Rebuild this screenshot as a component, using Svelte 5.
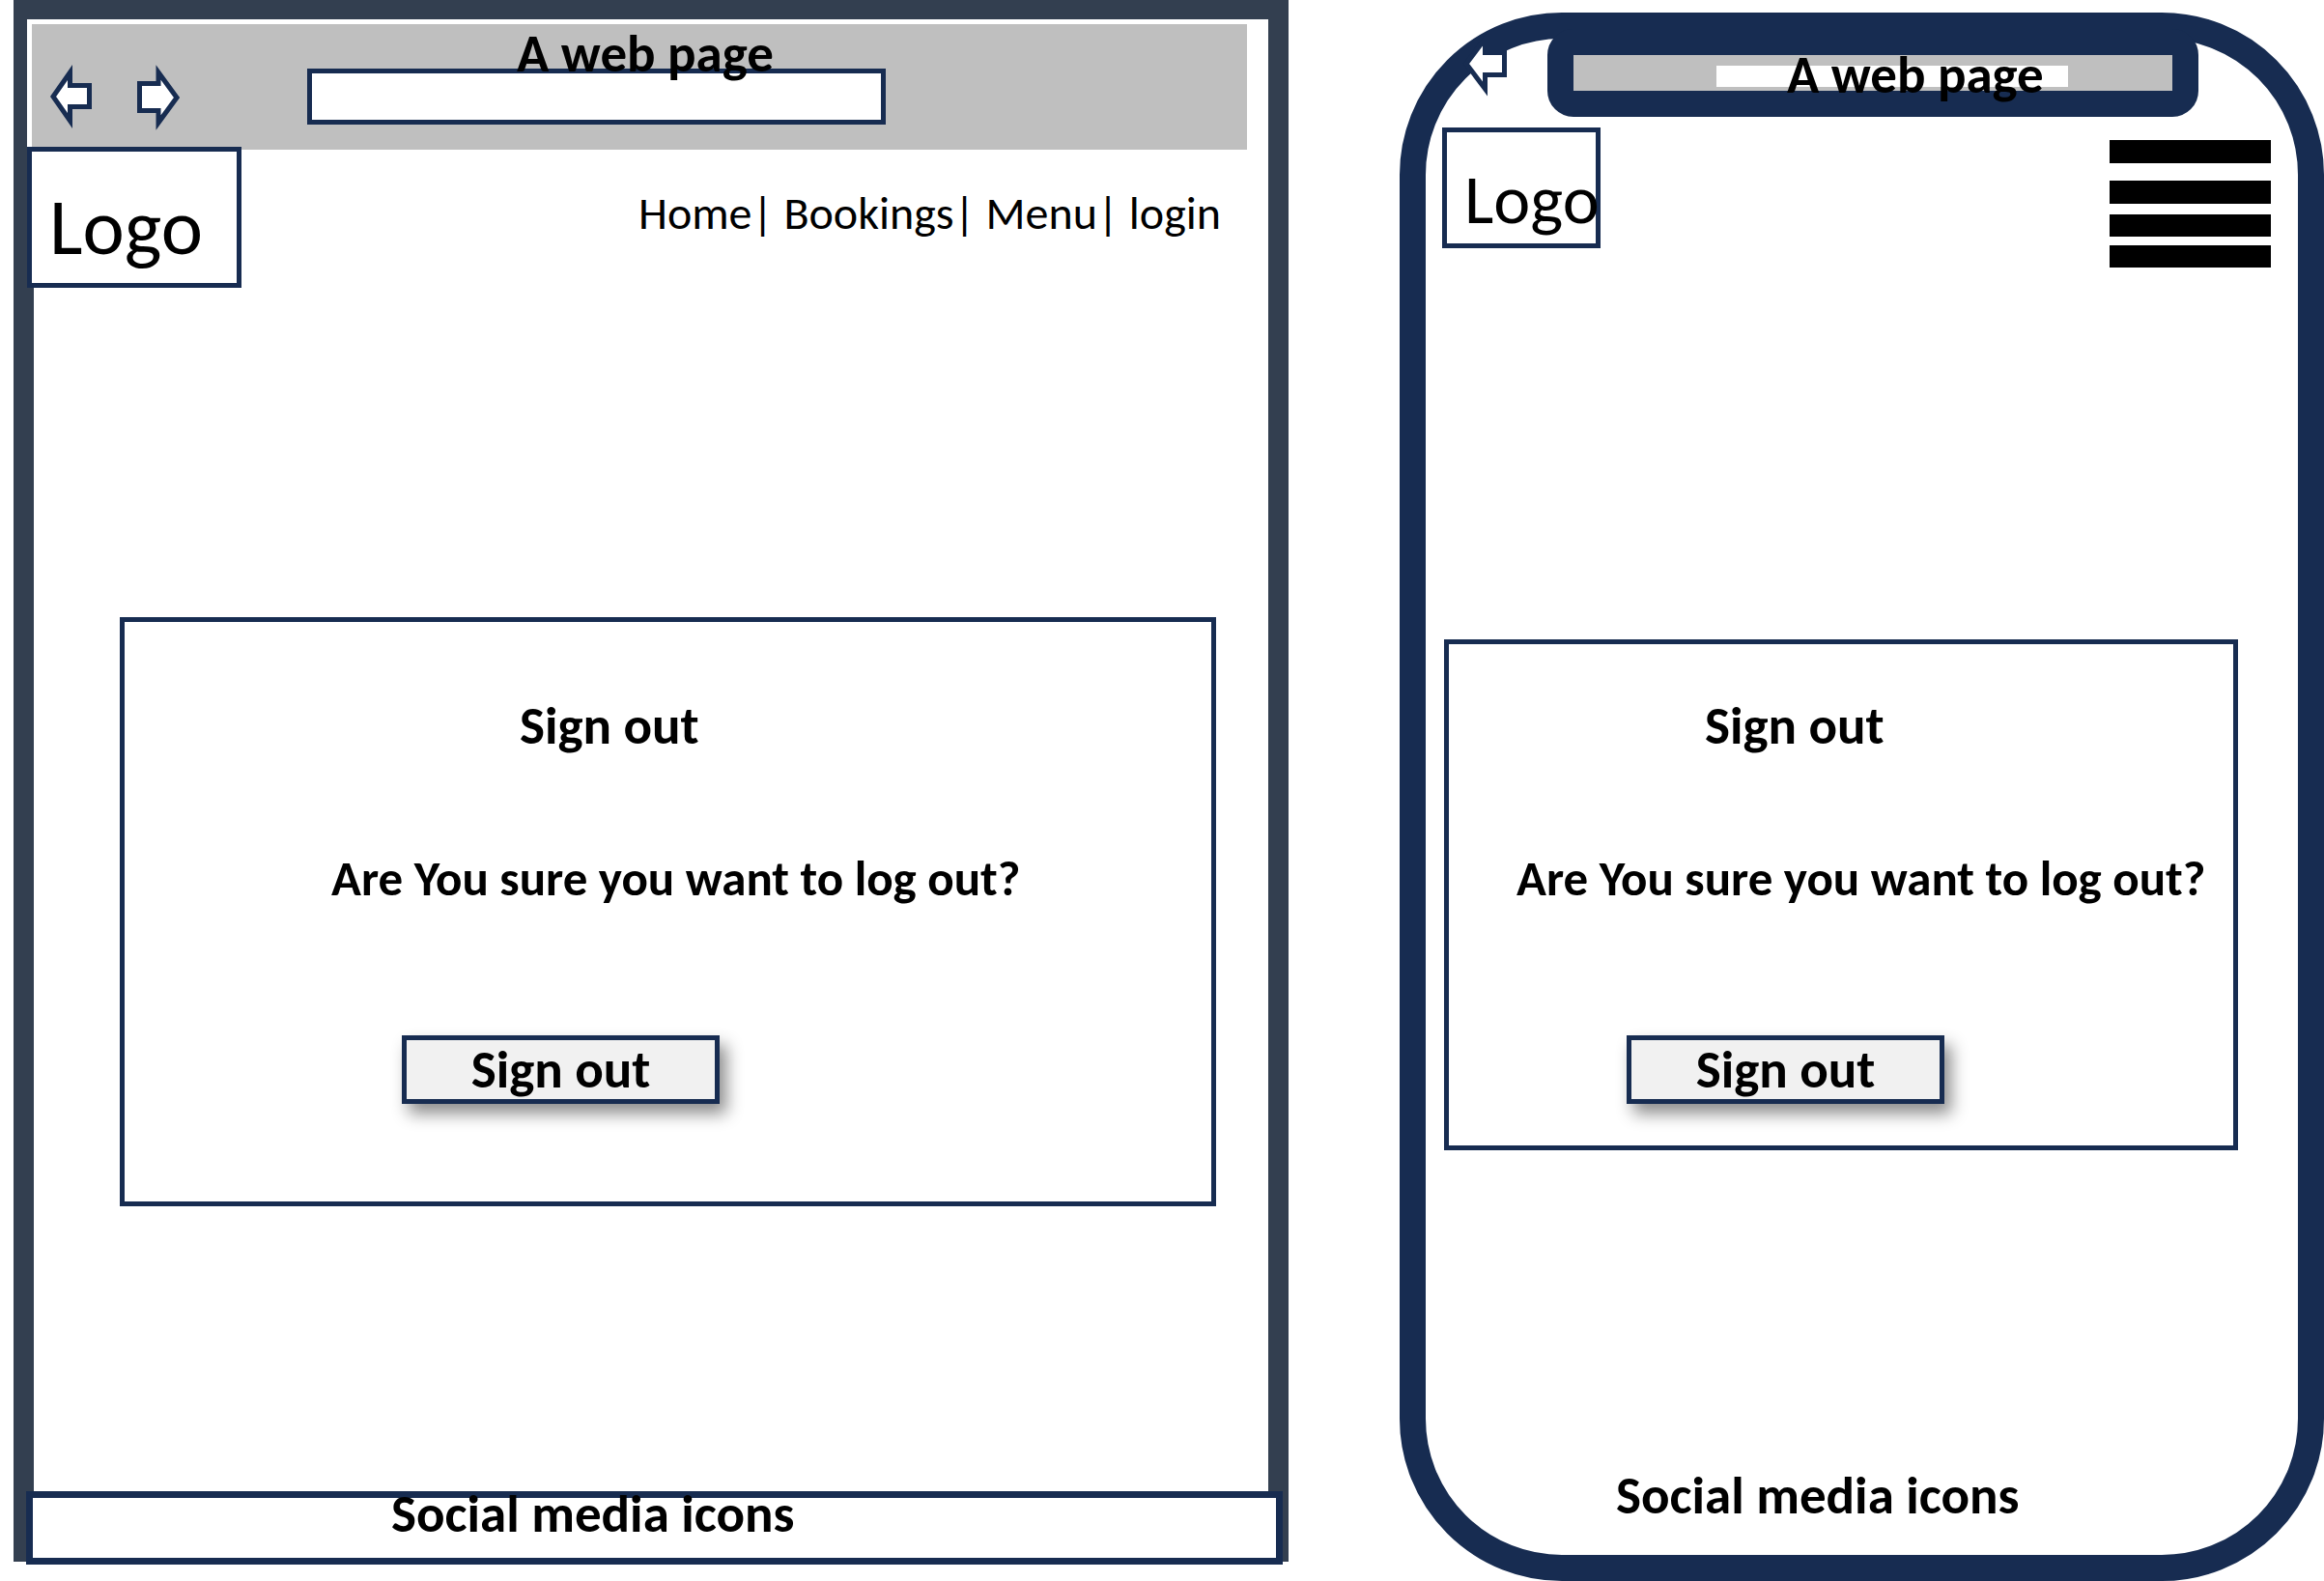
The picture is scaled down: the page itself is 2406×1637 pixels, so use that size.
<script>
  const links = ['Home', 'Bookings', 'Menu', 'login'];
</script>

{#snippet dialog(id)}
  <section class="dialog" aria-labelledby={id}>
    <h2 {id}>Sign out</h2>
    <p class="question">Are You sure you want to log out?</p>
    <button class="confirm" type="button">Sign out</button>
  </section>
{/snippet}

<div class="board">
  <article class="browser">
    <div class="toolbar">
      <div class="controls">
        <button class="icon" type="button" aria-label="Back">
          <svg width="44" height="70" viewBox="0 0 44 70">
            <path d="M3 35 20.500 10V23.500H40.500V45.500H20.500V60Z" />
          </svg>
        </button>
        <button class="icon" type="button" aria-label="Forward">
          <svg width="44" height="70" viewBox="0 0 44 70">
            <path d="M41 36 22 10V21.500H2.500V49.500H22V62Z" />
          </svg>
        </button>
        <input class="address" type="text" aria-label="Address" />
      </div>
      <h1>A web page</h1>
    </div>

    <header class="masthead">
      <div class="logo">Logo</div>
      <nav>
        {#each links as link, i}<a href="#{link.toLowerCase()}">{link}</a>{i < links.length - 1 ? '| ' : ''}{/each}
      </nav>
    </header>

    {@render dialog('desktop-title')}

    <footer>Social media icons</footer>
  </article>

  <article class="phone">
    <div class="top">
      <button class="icon" type="button" aria-label="Back">
        <svg width="50" height="72" viewBox="0 0 50 72">
          <path d="M6 34 25.500 8V22.500H45.500V45.500H25.500V60Z" />
        </svg>
      </button>
      <div class="notch">
        <input class="address" type="text" aria-label="Address" />
        <h1>A web page</h1>
      </div>
    </div>

    <header class="masthead">
      <div class="logo">Logo</div>
      <button class="menu" type="button" aria-label="Menu">
        <svg width="167" height="132" viewBox="0 0 167 132">
          <path d="M0 0H167V24H0ZM0 42H167V66H0ZM0 77H167V100H0ZM0 109H167V132H0Z" />
        </svg>
      </button>
    </header>

    {@render dialog('phone-title')}

    <footer>Social media icons</footer>
  </article>
</div>

<style>
  :global(body) {
    margin: 0;
    background: #fff;
  }

  .board {
    --navy: #172c51;
    --slate: #333f50;
    --grey: #bfbfbf;
    display: grid;
    grid-template-columns: minmax(0, 1320fr) minmax(0, 957fr);
    column-gap: 115px;
    align-items: start;
    padding-left: 14px;
    color: #000;
    font-family: Carlito, Calibri, Lato, sans-serif;
    font-size: 55px;
    line-height: 62px;
  }

  .board * {
    box-sizing: border-box;
  }

  h1,
  h2,
  p {
    margin: 0;
    font-size: inherit;
    font-weight: 700;
    white-space: nowrap;
  }

  button,
  input {
    margin: 0;
    padding: 0;
    border: 0;
    border-radius: 0;
    background: none;
    color: inherit;
    font: inherit;
  }

  svg {
    display: block;
  }

  .icon {
    flex: none;
  }

  .icon path {
    fill: #fff;
    stroke: var(--navy);
    stroke-width: 5;
    stroke-miterlimit: 10;
  }

  .address {
    min-width: 0;
    background: #fff;
  }

  .masthead {
    display: flex;
    justify-content: space-between;
    align-items: flex-start;
  }

  .logo {
    flex: none;
    border: 5px solid var(--navy);
    background: #fff;
    line-height: 80px;
  }

  .dialog {
    display: flex;
    flex-direction: column;
    align-items: flex-start;
    border: 5px solid var(--navy);
  }

  .question {
    margin-top: 96px;
    font-size: 51px;
  }

  .confirm {
    width: 329px;
    height: 71px;
    margin-top: 131px;
    border: 5px solid var(--navy);
    background: #f1f1f1;
    box-shadow: 7px 10px 16px rgba(0, 0, 0, 0.45);
    font-weight: 700;
  }

  footer {
    font-weight: 700;
  }

  /* Desktop browser */
  .browser {
    border: 21px solid var(--slate);
    border-top-width: 20px;
    border-bottom: 0;
  }

  .browser .toolbar {
    display: grid;
    margin: 0 17px 0 -7px;
    border: 5px solid #fff;
    background: var(--grey);
  }

  .browser .toolbar > * {
    grid-area: 1 / 1;
  }

  .browser h1 {
    justify-self: center;
    padding-left: 12px;
  }

  .browser .controls {
    display: flex;
    align-items: center;
    padding: 40px 20px 20px 19px;
  }

  .browser .icon + .icon {
    margin-left: 46px;
  }

  .browser .address {
    flex: 0 1 599px;
    height: 58px;
    margin-left: 132px;
    border: 5px solid var(--navy);
  }

  .browser .masthead {
    margin: -8px 0 0 -7px;
    padding-right: 49px;
  }

  .browser .logo {
    width: 222px;
    padding: 38px 0 18px 18px;
    font-size: 82px;
  }

  .browser nav {
    padding-top: 38px;
    font-size: 48px;
    white-space: nowrap;
  }

  nav a {
    color: inherit;
    text-decoration: none;
  }

  .browser .dialog {
    margin: 341px 54px 295px 89px;
    padding: 77px 0 101px 214px;
  }

  .browser h2 {
    margin-left: 195px;
  }

  .browser .confirm {
    margin-left: 73px;
  }

  .browser footer {
    margin: 0 -15px -3px -8px;
    padding: 0 0 28px 371px;
    border: 7px solid var(--navy);
    background: #fff;
    line-height: 34px;
  }

  /* Phone */
  .phone {
    margin-top: 13px;
    border: 27px solid var(--navy);
    border-radius: 168px;
  }

  .phone .top {
    display: flex;
    align-items: flex-start;
    margin-top: -10px;
    padding: 0 103px 0 36px;
  }

  .phone .icon {
    margin: 2px 40px 0 0;
  }

  .phone .notch {
    flex: 1;
    display: grid;
    grid-template-rows: 37px;
    border: 27px solid var(--navy);
    border-radius: 27px;
    background: var(--grey);
  }

  .notch > * {
    grid-area: 1 / 1;
  }

  .notch .address {
    width: 364px;
    height: 22px;
    margin: 11px 0 0 148px;
  }

  .notch h1 {
    padding-left: 221px;
    line-height: 42px;
  }

  .phone .masthead {
    height: 125px;
    margin-top: 11px;
    padding: 0 28px 0 17px;
  }

  .phone .logo {
    width: 164px;
    padding: 29px 0 6px 18px;
    font-size: 72px;
  }

  .phone .menu {
    margin-top: 13px;
  }

  .phone .dialog {
    margin: 405px 62px 327px 19px;
    padding: 54px 0 43px 70px;
  }

  .phone h2 {
    margin-left: 195px;
  }

  .phone .confirm {
    margin-left: 114px;
  }

  .phone footer {
    padding: 0 0 30px 197px;
  }
</style>
